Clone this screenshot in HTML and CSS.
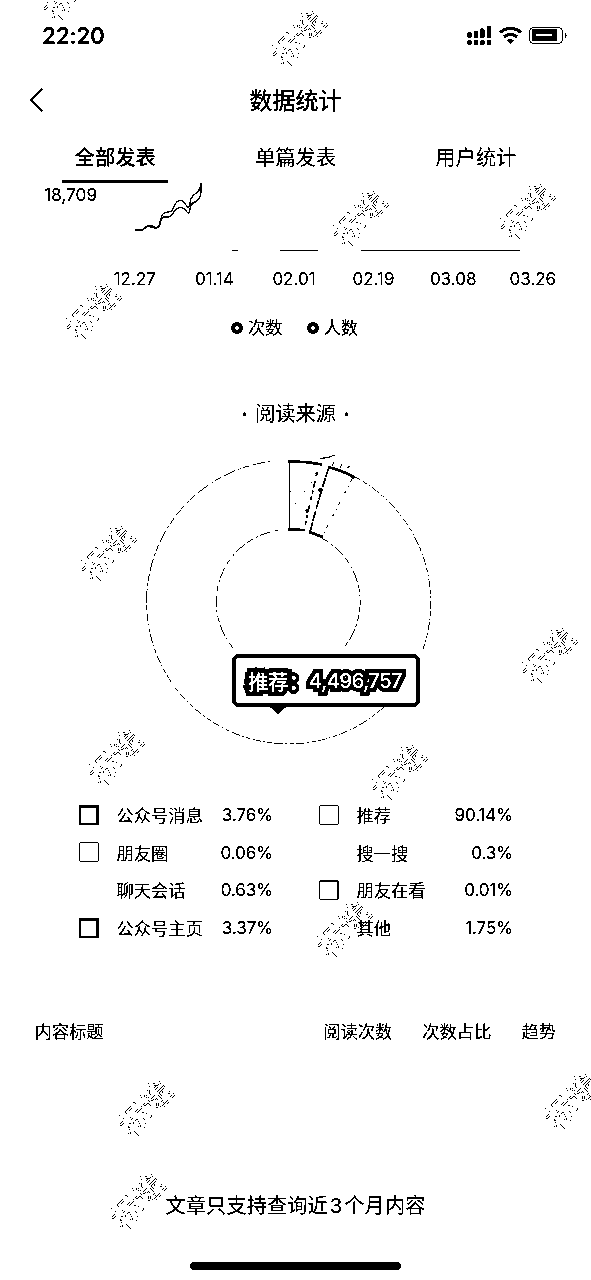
FILE: index.html
```html
<!DOCTYPE html>
<html lang="zh-CN">
<head>
<meta charset="utf-8">
<title>数据统计</title>
<link rel="stylesheet" href="styles.css">
</head>
<body>
<svg class="defs" width="0" height="0" aria-hidden="true">
  <filter id="mono" x="0" y="0" width="100%" height="100%" color-interpolation-filters="sRGB">
    <feColorMatrix type="saturate" values="0"/>
    <feComponentTransfer>
      <feFuncR type="discrete" tableValues="0 0 0 1 1"/>
      <feFuncG type="discrete" tableValues="0 0 0 1 1"/>
      <feFuncB type="discrete" tableValues="0 0 0 1 1"/>
    </feComponentTransfer>
  </filter>
</svg>
<div class="screen">
  <header class="status">
    <span class="time">22:20</span>
    <svg class="status-icons" width="102" height="22" viewBox="466 25 102 22">
      <g>
        <circle cx="469.500" cy="35" r="2.700"/><rect x="474" y="31" width="4" height="7"/><rect x="480" y="28.500" width="4.500" height="9.500" rx="1.500"/><rect x="487" y="26" width="4" height="12"/>
        <circle cx="469.500" cy="42.500" r="2.600"/><rect x="474" y="40" width="4" height="5"/><circle cx="482.300" cy="42.500" r="2.600"/><rect x="487" y="40" width="4" height="5"/>
      </g>
      <g fill="none" stroke="#000" stroke-width="3">
        <path d="M500 32.500Q510.500 24 521 32.500"/><path d="M504 37Q510.500 31.500 517 37"/>
      </g>
      <path d="M507 40.500Q510.500 37.500 514 40.500L510.500 44Z"/>
      <rect x="529.500" y="27.500" width="33" height="16" rx="4" fill="none" stroke="#000"/>
      <rect x="532" y="29" width="25" height="12" rx="1.500"/>
      <rect x="536" y="34" width="16" height="2" fill="#fff"/>
      <path d="M565 33Q568 35.500 565 38Z"/>
    </svg>
  </header>

  <nav class="titlebar">
    <svg class="back" width="14" height="24" viewBox="0 0 14 24"><path d="M13 .5L2 12L13 23.500" fill="none" stroke="#000" stroke-width="2"/></svg>
    <h1>数据统计</h1>
  </nav>

  <div class="tabs">
    <div class="tab active">全部发表</div>
    <div class="tab">单篇发表</div>
    <div class="tab">用户统计</div>
  </div>

  <section class="trend">
    <div class="ymax">18,709</div>
    <svg class="lines" width="591" height="78" viewBox="0 180 591 78">
      <g fill="none" stroke="#000" stroke-width="1.300">
        <path d="M135 230H142Q145 228 148 225.500Q151 225 154 227Q158 229 160 224Q161 215 164 213L172 211Q175 202 179 200.500Q183 200 186 205Q188 209 190 205Q190 197 195 194Q201 190 201 183V193"/>
        <path d="M135 230H142Q146 227 148 226Q152 227 156 228Q159 228 160 222Q162 217 165 217Q169 218 172 215Q174 210 179 207.500Q184 207 187 212Q189 215 190 209Q191 203 195 202Q201 199 201 191"/>
      </g>
      <path d="M232 250.500H238M280 250.500H318M361 250.500H520" stroke="#000" fill="none"/>
    </svg>
    <div class="dates"><span>12.27</span><span>01.14</span><span>02.01</span><span>02.19</span><span>03.08</span><span>03.26</span></div>
    <div class="series"><span><i></i>次数</span><span><i></i>人数</span></div>
  </section>

  <section class="source">
    <h2><b>·</b>阅读来源<b>·</b></h2>
    <div class="donut">
      <svg width="310" height="310" viewBox="135 450 310 310" fill="none" stroke="#000">
        <g class="ring">
          <path d="M353 476A142 142 0 0 1 423 649M384 707A142 142 0 0 1 146.500 602" stroke-dasharray="9 2 5 2 2 2"/>
          <path d="M146.500 602A142 142 0 0 1 270 461.500" stroke-dasharray="13 3 3 2 7 3"/>
          <path d="M322.500 538.500A72 72 0 0 1 345 646M233.500 648.500A72 72 0 0 1 278 530.500" stroke-dasharray="7 3 3 2 12 3"/>
        </g>
        <path d="M289.500 461V529"/>
        <path d="M289 461.500Q306 461 322 464.500M289 529.500L305 530M328 467Q341 470 354 477M309 532L323 537" stroke-width="2.500"/>
        <path d="M317 472L304 530" stroke-width="1.500" stroke-dasharray="4 5 7 3 3 3"/>
        <path d="M329 467Q319 497 310 532" stroke-width="1.600" stroke-dasharray="11 1 9 2"/>
        <path d="M352 479L323 535" stroke-dasharray="3 5 1 4"/>
        <path d="M320 458.500L328 457.500L335 455M334 462L332 466M342 464L340 468M347 468L350 466"/>
        <g fill="#000" stroke="none"><circle cx="290" cy="461.500" r="2"/><circle cx="290" cy="529.500" r="2"/><circle cx="353" cy="477" r="2"/><circle cx="317" cy="473" r="1.500"/><circle cx="320" cy="490" r="2"/><path d="M290 491h1v1h-1zM304 491h1v1h-1zM295 503h1v1h-1zM311 482h1v1h-1zM305 510l4-2-2 6z"/></g>
      </svg>
      <div class="tip"><span>推荐：</span><span class="num">4,496,757</span></div>
    </div>
    <div class="legend">
      <div class="item"><i class="box bold"></i><span>公众号消息</span><em>3.76%</em></div>
      <div class="item"><i class="box"></i><span>推荐</span><em>90.14%</em></div>
      <div class="item"><i class="box"></i><span>朋友圈</span><em>0.06%</em></div>
      <div class="item"><i class="box none"></i><span>搜一搜</span><em>0.3%</em></div>
      <div class="item"><i class="box none"></i><span>聊天会话</span><em>0.63%</em></div>
      <div class="item"><i class="box mid"></i><span>朋友在看</span><em>0.01%</em></div>
      <div class="item"><i class="box bold"></i><span>公众号主页</span><em>3.37%</em></div>
      <div class="item"><i class="box none"></i><span>其他</span><em>1.75%</em></div>
    </div>
  </section>

  <div class="thead"><span class="grow">内容标题</span><span>阅读次数</span><span>次数占比</span><span>趋势</span></div>
  <p class="note">文章只支持查询近<span>3</span>个月内容</p>
  <div class="home"></div>

  <div class="marks">
    <span style="left:68px;top:-9px">标途</span>
    <span style="left:297px;top:37px">标途</span>
    <span style="left:358px;top:217px">标途</span>
    <span style="left:525px;top:210px">标途</span>
    <span style="left:91px;top:310px">标途</span>
    <span style="left:106px;top:552px">标途</span>
    <span style="left:547px;top:654px">标途</span>
    <span style="left:114px;top:756px">标途</span>
    <span style="left:397px;top:771px">标途</span>
    <span style="left:342px;top:928px">标途</span>
    <span style="left:144px;top:1107px">标途</span>
    <span style="left:570px;top:1100px">标途</span>
    <span style="left:136px;top:1200px">标途</span>
  </div>
</div>
</body>
</html>
```
FILE: styles.css
```css
* { box-sizing: border-box; }
body { margin: 0; background: #fff; color: #000; font-family: Inter, "Noto Sans CJK SC", sans-serif; font-size: 17.3px; }
.defs { position: absolute; }
.screen { position: relative; width: 591px; height: 1280px; overflow: hidden; background: #fff; display: flex; flex-direction: column; filter: url(#mono); }
i, em, b { font-style: normal; font-weight: 400; }

.status { height: 72px; padding: 0 23px 0 42px; display: flex; justify-content: space-between; align-items: center; }
.time { font-size: 22.5px; font-weight: 600; line-height: 28px; letter-spacing: -.3px; }
.titlebar { height: 57px; padding: 0 29px; display: flex; align-items: center; }
.titlebar .back { margin-top: -2px; }
.titlebar h1 { flex: 1; margin: 0 15px 0 1px; text-align: center; font-size: 23px; font-weight: 500; line-height: 30px; }

.tabs { height: 55px; padding: 0 25px; display: grid; grid-template-columns: repeat(3, 1fr); }
.tab { position: relative; text-align: center; font-size: 20.300px; line-height: 58px; }
.tab.active { font-weight: 500; }
.tab.active::after { content: ""; position: absolute; left: 37px; right: 37px; top: 51px; height: 3px; background: #000; }

.trend { height: 160px; display: flex; flex-direction: column; }
.ymax { height: 22px; margin: 0 0 -26px 44px; line-height: 22px; font-size: 17.3px; }
.lines { display: block; flex: none; }
.dates { display: grid; grid-template-columns: repeat(6, 79.600px); padding-left: 95px; margin-top: 10px; line-height: 22px; text-align: center; font-size: 17px; }
.series { display: flex; gap: 24px; margin: 26px 0 0 231px; line-height: 24px; }
.series span { display: flex; align-items: center; }
.series i { width: 12px; height: 12px; border: 4px solid #000; border-radius: 50%; margin-right: 5px; }

.source h2 { margin: 55px 0 0; text-align: center; font-size: 20.300px; font-weight: 400; line-height: 30px; }
.source b { display: inline-block; width: 21px; font-weight: 700; }
.donut { position: relative; height: 310px; margin: 21px 0 0 135px; }
.donut svg { display: block; }
.ring { stroke-width: .75; }
.tip { position: absolute; left: 97px; top: 204px; width: 188px; height: 53px; border: 4px solid #000; border-radius: 7px; display: flex; align-items: center; padding-left: 12px; background: #fff; font-size: 20.300px; font-weight: 600; color: #fff; -webkit-text-stroke: 8px #000; paint-order: stroke fill; white-space: nowrap; }
.tip::after { content: ""; position: absolute; left: 34px; top: 49px; border: 8px solid transparent; border-top: 7px solid #000; border-bottom: 0; }
.tip .num { letter-spacing: -.8px; }
.legend { display: grid; grid-template-columns: 194px 194px; column-gap: 46px; grid-auto-rows: 37.600px; margin: 36px 0 0 79px; }
.item { display: flex; align-items: center; }
.item span { flex: 1; }
.item em { font-size: 17.1px; letter-spacing: -.1px; }
.box { width: 20px; height: 20px; margin-right: 17.5px; border: 1px solid #000; border-radius: 2px; }
.box.bold { border-width: 3px 3px 2px 2px; border-radius: 1px; }
.box.mid { border-width: 2px 2px 1px 1px; }
.box.none { border-color: transparent; }

.thead { display: flex; gap: 30px; margin: 73px 35px 0 34.5px; line-height: 26px; }
.grow { flex: 1; }
.note { margin: 146px 0 0; text-align: center; font-size: 20.300px; line-height: 30px; }
.note span { margin: 0 2px; }
.home { width: 211px; height: 8px; margin: 41px 0 0 190px; border-radius: 4px; background: #000; }

.marks span { position: absolute; font: 400 31px/32px "Noto Sans CJK SC", sans-serif; white-space: nowrap; color: transparent; -webkit-text-stroke: .8px #7c7c7c; transform: translate(-50%, -50%) rotate(-48deg); }
```
